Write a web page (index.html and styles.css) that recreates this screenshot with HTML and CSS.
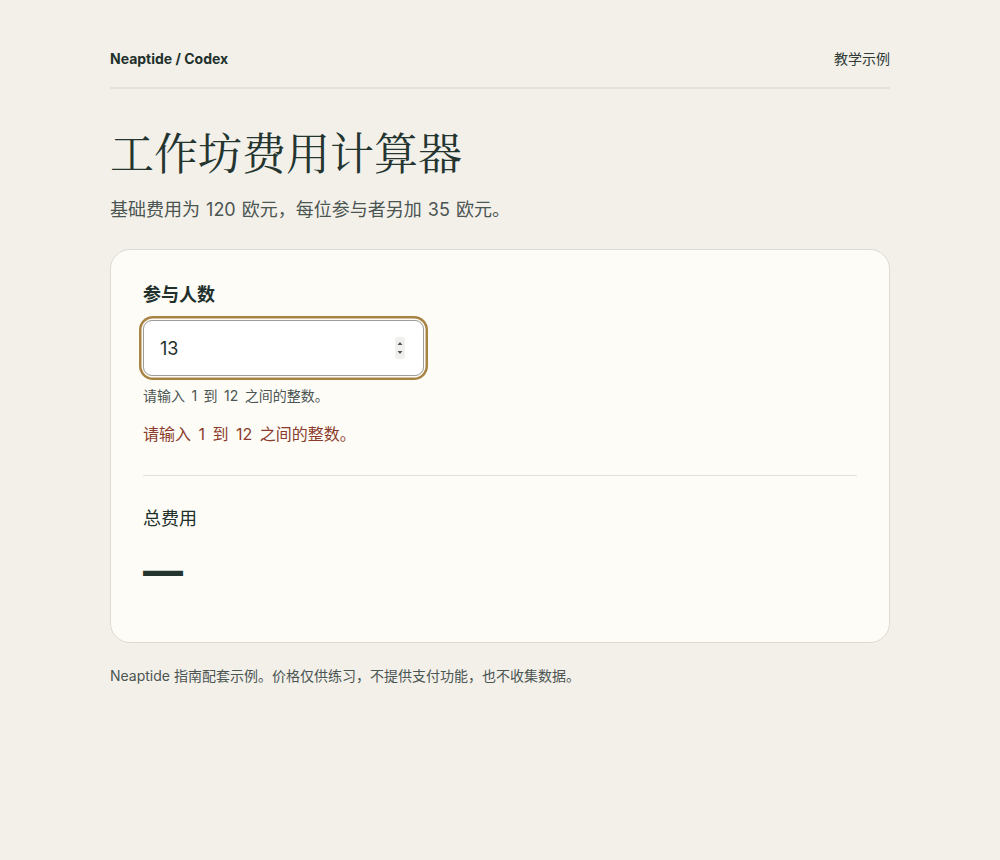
FILE: index.html
```html
<!DOCTYPE html>
<html lang="zh-CN">
<head>
<meta charset="utf-8">
<title>工作坊费用计算器</title>
<link rel="stylesheet" href="styles.css">
</head>
<body>
<div class="page">
  <header class="topbar">
    <span class="brand">Neaptide / Codex</span>
    <span class="tag">教学示例</span>
  </header>
  <h1 class="title">工作坊费用计算器</h1>
  <p class="lead">基础费用为 120 欧元，每位参与者另加 35 欧元。</p>
  <section class="card">
    <label class="field-label" for="count">参与人数</label>
    <div class="input-wrap">
      <input id="count" class="num-input" type="text" value="13">
      <span class="spinner" aria-hidden="true">
        <svg width="10" height="22" viewBox="0 0 10 22"><rect x="0" y="0" width="10" height="22" rx="2" fill="#f0f0ee"/><path d="M2.5 8 L5 5 L7.5 8 Z" fill="#555"/><path d="M2.5 14 L5 17 L7.5 14 Z" fill="#555"/></svg>
      </span>
    </div>
    <p class="hint">请输入 1 到 12 之间的整数。</p>
    <p class="error">请输入 1 到 12 之间的整数。</p>
    <hr class="divider">
    <p class="total-label">总费用</p>
    <p class="total-value">—</p>
  </section>
  <p class="footnote">Neaptide 指南配套示例。价格仅供练习，不提供支付功能，也不收集数据。</p>
</div>
</body>
</html>
```
FILE: styles.css
```css
* { box-sizing: border-box; }
html, body { margin: 0; padding: 0; }
body {
  background: #f3f0ea;
  color: #21302c;
  font-family: Inter, "Noto Sans CJK SC", sans-serif;
}
.page {
  width: 780px;
  margin: 0 auto;
  padding-top: 47px;
}
.topbar {
  display: flex;
  justify-content: space-between;
  align-items: center;
  height: 22px;
}
.brand {
  font-size: 14px;
  font-weight: 700;
  color: #22302c;
}
.tag {
  font-size: 14px;
  color: #2e3a36;
}
.topbar + .title { border-top: 2px solid #e4e1d9; margin-top: 18px; padding-top: 34px; }
.title {
  margin: 0;
  font-family: "Noto Serif CJK SC", "Noto Serif", "Liberation Serif", serif;
  font-weight: 400;
  font-size: 44px;
  line-height: 56px;
  color: #243530;
}
.lead {
  margin: 18px 0 0;
  font-size: 18px;
  line-height: 26px;
  word-spacing: 1px;
  color: #4b5552;
}
.card {
  margin-top: 26px;
  background: #fdfcf7;
  border: 1px solid #dedbd3;
  border-radius: 20px;
  padding: 33px 32px 51px;
}
.field-label {
  display: block;
  font-size: 18px;
  font-weight: 700;
  line-height: 24px;
  color: #22302c;
}
.input-wrap {
  position: relative;
  width: 281px;
  margin-top: 13px;
  border-radius: 10px;
  box-shadow: 0 0 0 1.5px #fdfcf7, 0 0 0 4px #a98343;
}
.num-input {
  display: block;
  width: 100%;
  height: 56px;
  border: 1px solid #9a9e9a;
  border-radius: 9px;
  background: #fff;
  padding: 0 16px;
  font-family: Inter, "Noto Sans CJK SC", sans-serif;
  font-size: 18px;
  color: #22302c;
  outline: none;
}
.spinner {
  position: absolute;
  right: 19px;
  top: 17px;
  display: block;
  line-height: 0;
}
.hint {
  margin: 9px 0 0;
  font-size: 14px;
  line-height: 22px;
  word-spacing: 2.5px;
  color: #4b5552;
}
.error {
  margin: 15px 0 0;
  font-size: 16px;
  line-height: 24px;
  word-spacing: 3px;
  color: #8b3b2b;
}
.divider {
  margin: 29px 0 0;
  border: 0;
  border-top: 1px solid #e4e1d9;
}
.total-label {
  margin: 31px 0 0;
  font-size: 18px;
  line-height: 24px;
  color: #22302c;
}
.total-value {
  margin: 20px 0 0;
  font-family: Inter, sans-serif;
  font-weight: 800;
  font-size: 40px;
  line-height: 40px;
  color: #243530;
}
.footnote {
  margin: 23px 0 0;
  font-size: 14px;
  line-height: 20px;
  color: #4b5552;
}
```
